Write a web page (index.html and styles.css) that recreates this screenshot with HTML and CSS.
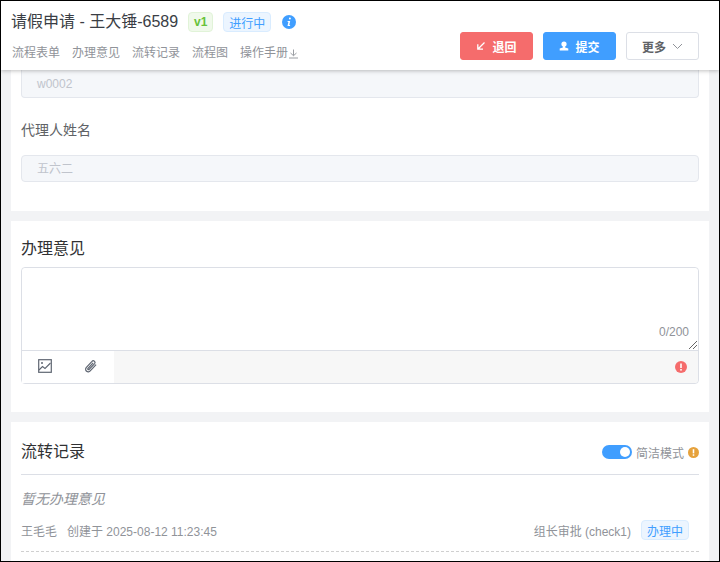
FILE: index.html
```html
<!DOCTYPE html>
<html lang="zh">
<head>
<meta charset="utf-8">
<title>请假申请</title>
<link rel="stylesheet" href="styles.css">
</head>
<body>
<div class="frame">
  <header class="header">
    <div class="header-main">
      <div class="title-row">
        <h1 class="title">请假申请 - 王大锤-6589</h1>
        <span class="tag tag-green">v1</span>
        <span class="tag tag-blue">进行中</span>
        <svg class="info" width="14" height="14" viewBox="0 0 14 14"><circle cx="7" cy="7" r="7" fill="#409eff"/><path d="M7.900 2.600a1 1 0 1 1-.01 2 1 1 0 0 1 .01-2zM5.700 6h2.500l-.9 4h.9l-.2 1H5.500l.9-4h-.9z" fill="#fff"/></svg>
      </div>
      <nav class="tabs">
        <span>流程表单</span><span>办理意见</span><span>流转记录</span><span>流程图</span>
        <span class="manual">操作手册<svg width="11" height="10" viewBox="0 0 11 10"><path d="M5.500 0.500v6M2.500 4l3 2.700L8.500 4M1 9h9" fill="none" stroke="#909399" stroke-width="0.9"/></svg></span>
      </nav>
    </div>
    <div class="actions">
      <button class="btn btn-red"><svg width="10" height="10" viewBox="0 0 10 10"><path d="M8.500 1.500L2 8M1.800 3.200V8.200H7" fill="none" stroke="#fff" stroke-width="1.300"/></svg>退回</button>
      <button class="btn btn-blue"><svg width="10" height="10" viewBox="0 0 10 10"><circle cx="5" cy="3" r="2.600" fill="#fff"/><path d="M3.900 5h2.200v1.600l3.200.9V9.500H.7V7.500l3.200-.9z" fill="#fff"/></svg>提交</button>
      <button class="btn btn-plain">更多<svg width="11" height="7" viewBox="0 0 11 7"><path d="M1 1l4.500 4.500L10 1" fill="none" stroke="#909399" stroke-width="1"/></svg></button>
    </div>
  </header>
  <main class="content">
    <section class="card card-form">
      <div class="field">w0002</div>
      <div class="label">代理人姓名</div>
      <div class="field">五六二</div>
    </section>
    <section class="card card-opinion">
      <h2 class="card-title">办理意见</h2>
      <div class="editor">
        <div class="textarea">
          <span class="count">0/200</span>
          <svg class="grip" width="8" height="8" viewBox="0 0 8 8"><path d="M0 8L8 0M4 8L8 4" stroke="#666" stroke-width="1"/></svg>
        </div>
        <div class="toolbar">
          <div class="tools">
            <svg width="14" height="14" viewBox="0 0 14 14"><rect x="0.700" y="0.700" width="12.600" height="12.600" fill="none" stroke="#5f6672" stroke-width="1.200"/><path d="M1 11l3.500-3.500 2.500 2L12.500 4" fill="none" stroke="#5f6672" stroke-width="1.100"/><circle cx="4" cy="4" r="1" fill="#5f6672"/></svg>
            <svg width="14" height="14" viewBox="0 0 14 14"><path d="M12.600 5.300L6.700 11.500a2.500 2.500 0 0 1-4-3.200l5.800-6.300a1.700 1.700 0 0 1 2.600 2.200L5.500 10.100a.8.800 0 0 1-1.200-1L9.600 3.500" transform="translate(-.5 .4)" fill="none" stroke="#5f6672" stroke-width="1.200"/></svg>
          </div>
          <svg class="alert" width="12" height="12" viewBox="0 0 12 12"><circle cx="6" cy="6" r="6" fill="#f56c6c"/><rect x="5.200" y="2.500" width="1.600" height="4.500" fill="#fff"/><rect x="5.200" y="8" width="1.600" height="1.600" fill="#fff"/></svg>
        </div>
      </div>
    </section>
    <section class="card card-log">
      <div class="log-head">
        <h2 class="card-title">流转记录</h2>
        <div class="mode">
          <span class="switch"></span>
          <span>简洁模式</span>
          <svg width="11" height="11" viewBox="0 0 10 10"><circle cx="5" cy="5" r="5" fill="#e6a23c"/><rect x="4.300" y="2" width="1.400" height="3.800" fill="#fff"/><rect x="4.300" y="6.600" width="1.400" height="1.400" fill="#fff"/></svg>
        </div>
      </div>
      <div class="empty">暂无办理意见</div>
      <div class="meta">
        <span class="author">王毛毛</span>
        <span>创建于 2025-08-12 11:23:45</span>
        <span class="node">组长审批 (check1)</span>
        <span class="tag tag-blue tag-small">办理中</span>
      </div>
      <div class="dash"></div>
    </section>
  </main>
</div>
</body>
</html>
```
FILE: styles.css
```css
* { box-sizing: border-box; }
html, body { margin: 0; padding: 0; }
body { width: 720px; height: 562px; overflow: hidden; font-family: "Liberation Sans", "Noto Sans CJK SC", sans-serif; }
.frame { width: 720px; height: 562px; border: 1px solid #000; background: #f2f3f5; display: flex; flex-direction: column; overflow: hidden; }
.header { flex: none; height: 69px; background: #fff; box-shadow: 0 1px 4px rgba(0, 0, 0, .25); position: relative; z-index: 2; display: flex; justify-content: space-between; align-items: flex-end; padding: 0 20px 10px 11px; }
.header-main { align-self: stretch; }
.title-row { display: flex; align-items: center; height: 22px; margin-top: 10px; }
.title { margin: 0 0 0 -1px; font-size: 16px; font-weight: 400; color: #3a3e45; line-height: 22px; }
.tag { display: inline-flex; align-items: center; justify-content: center; height: 20px; font-size: 12px; border-radius: 4px; border: 1px solid; }
.tag-green { width: 25px; margin-left: 10px; color: #67c23a; background: #f0f9eb; border-color: #e1f3d8; font-weight: 700; }
.tag-blue { width: 48px; margin-left: 10px; color: #409eff; background: #ecf5ff; border-color: #d9ecff; }
.info { margin-left: 11px; }
.tabs { display: flex; gap: 12px; margin-top: 12px; font-size: 12px; line-height: 16px; color: #909399; }
.manual { display: flex; align-items: center; }
.manual svg { margin-top: 2px; }
.actions { display: flex; gap: 10px; }
.btn { height: 28px; width: 73px; border-radius: 3px; border: 1px solid; font: 700 12px "Liberation Sans", "Noto Sans CJK SC", sans-serif; display: flex; align-items: center; justify-content: center; gap: 6px; padding: 0; color: #fff; }
.btn-red { background: #f56c6c; border-color: #f56c6c; }
.btn-blue { background: #409eff; border-color: #409eff; }
.btn-plain { background: #fff; border-color: #dcdfe6; color: #606266; }
.content { flex: 1; min-height: 0; overflow: hidden; padding: 0 10px; }
.card { background: #fff; padding: 0 10px; margin-bottom: 10px; }
.card-form { height: 141px; }
.field { height: 27px; background: #f5f7fa; border: 1px solid #e4e7ed; border-radius: 4px; padding: 1px 0 0 15px; font-size: 12px; line-height: 25px; color: #c0c4cc; }
.card-form .field:first-child { height: 28px; padding-top: 2px; border-top: none; border-radius: 0 0 4px 4px; }
.label { font-size: 14px; line-height: 20px; color: #606266; margin: 22px 0 15px; }
.card-opinion { height: 191px; padding-top: 17px; }
.card-title { margin: 0; font-size: 16px; font-weight: 400; line-height: 22px; color: #303133; }
.editor { margin-top: 7px; border: 1px solid #dcdfe6; border-radius: 4px; }
.textarea { height: 83px; border-bottom: 1px solid #dcdfe6; position: relative; background: #fff; border-radius: 4px 4px 0 0; }
.count { position: absolute; right: 9px; bottom: 11px; font-size: 12px; line-height: 14px; color: #909399; }
.grip { position: absolute; right: 1px; bottom: 1px; }
.toolbar { height: 32px; background: #f7f7f7; display: flex; align-items: center; justify-content: space-between; padding-right: 11px; border-radius: 0 0 4px 4px; }
.tools { height: 32px; width: 92px; background: #fff; display: flex; align-items: center; gap: 32px; padding: 0 0 2px 16px; }
.card-log { padding-top: 19px; height: 200px; }
.log-head { display: flex; justify-content: space-between; align-items: center; height: 22px; margin-bottom: 12px; position: relative; }
.log-head::after { content: ""; position: absolute; left: 0; right: 0; bottom: -12px; height: 1px; background: #dcdfe6; }
.mode { display: flex; align-items: center; gap: 4px; font-size: 12px; color: #909399; }
.switch { width: 30px; height: 14px; border-radius: 7px; background: #409eff; position: relative; }
.switch::after { content: ""; position: absolute; right: 2px; top: 2px; width: 10px; height: 10px; border-radius: 50%; background: #fff; }
.empty { margin-top: 26px; font-size: 14px; line-height: 20px; font-style: italic; color: #909399; }
.meta { display: flex; align-items: center; height: 20px; margin-top: 11px; padding-right: 10px; font-size: 12px; color: #909399; }
.author { margin-right: 10px; }
.node { margin-left: auto; }
.tag-small { margin-left: 10px; }
.dash { margin-top: 11px; border-top: 1px dashed #d0d0d0; }
```
